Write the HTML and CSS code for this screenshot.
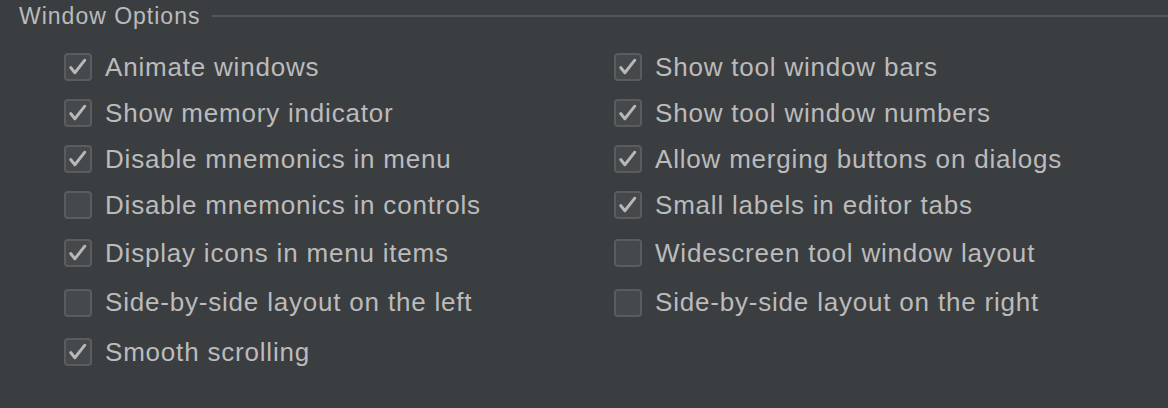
FILE: index.html
```html
<!DOCTYPE html>
<html>
<head>
<meta charset="utf-8">
<link rel="stylesheet" href="styles.css">
</head>
<body>
<div class="panel">
  <div class="title-row">
    <span class="title">Window Options</span>
    <span class="rule"></span>
  </div>
  <div class="grid">
    <div class="col">
      <label class="item"><span class="box checked"><svg viewBox="0 0 23 23"><path d="M4.5 12 L8.5 17 L18 5"/></svg></span><span class="text">Animate windows</span></label>
      <label class="item"><span class="box checked"><svg viewBox="0 0 23 23"><path d="M4.5 12 L8.5 17 L18 5"/></svg></span><span class="text">Show memory indicator</span></label>
      <label class="item"><span class="box checked"><svg viewBox="0 0 23 23"><path d="M4.5 12 L8.5 17 L18 5"/></svg></span><span class="text">Disable mnemonics in menu</span></label>
      <label class="item"><span class="box"></span><span class="text">Disable mnemonics in controls</span></label>
      <label class="item r5"><span class="box checked"><svg viewBox="0 0 23 23"><path d="M4.5 12 L8.5 17 L18 5"/></svg></span><span class="text">Display icons in menu items</span></label>
      <label class="item r6"><span class="box"></span><span class="text">Side-by-side layout on the left</span></label>
      <label class="item r7"><span class="box checked"><svg viewBox="0 0 23 23"><path d="M4.5 12 L8.5 17 L18 5"/></svg></span><span class="text">Smooth scrolling</span></label>
    </div>
    <div class="col">
      <label class="item"><span class="box checked"><svg viewBox="0 0 23 23"><path d="M4.5 12 L8.5 17 L18 5"/></svg></span><span class="text">Show tool window bars</span></label>
      <label class="item"><span class="box checked"><svg viewBox="0 0 23 23"><path d="M4.5 12 L8.5 17 L18 5"/></svg></span><span class="text">Show tool window numbers</span></label>
      <label class="item"><span class="box checked"><svg viewBox="0 0 23 23"><path d="M4.5 12 L8.5 17 L18 5"/></svg></span><span class="text">Allow merging buttons on dialogs</span></label>
      <label class="item"><span class="box checked"><svg viewBox="0 0 23 23"><path d="M4.5 12 L8.5 17 L18 5"/></svg></span><span class="text">Small labels in editor tabs</span></label>
      <label class="item r5"><span class="box"></span><span class="text">Widescreen tool window layout</span></label>
      <label class="item r6"><span class="box"></span><span class="text">Side-by-side layout on the right</span></label>
    </div>
  </div>
</div>
</body>
</html>
```
FILE: styles.css
```css
html, body {
  margin: 0;
  padding: 0;
  background: #3b3e41;
  width: 1168px;
  height: 408px;
  overflow: hidden;
}
.panel {
  font-family: "Liberation Sans", Arial, sans-serif;
  color: #bbbbbb;
}
.title-row {
  display: flex;
  align-items: center;
  padding: 2px 0 0 19px;
  height: 28px;
}
.title {
  font-size: 23px;
  letter-spacing: 1px;
  color: #bbbbbb;
}
.rule {
  flex: 1;
  height: 2px;
  background: #555859;
  margin-left: 12px;
}
.grid {
  display: grid;
  grid-template-columns: 550px 1fr;
  padding: 14px 0 0 64px;
}
.col {
  display: flex;
  flex-direction: column;
}
.item {
  display: flex;
  align-items: center;
  height: 46px;
}
.item.r5 { height: 48px; margin-top: 1px; }
.item.r6 { height: 49px; margin-top: 1px; }
.item.r7 { height: 48px; margin-top: 1px; }
.box {
  width: 24px;
  height: 24px;
  border: 2px solid #5a5d5f;
  border-radius: 4px;
  background: #45494b;
  flex: none;
  display: flex;
}
.box svg {
  width: 24px;
  height: 24px;
}
.box svg path {
  fill: none;
  stroke: #b8b8b8;
  stroke-width: 2.8;
  stroke-linecap: round;
  stroke-linejoin: round;
}
.text {
  margin-left: 13px;
  font-size: 26px;
  letter-spacing: 0.8px;
}
```
